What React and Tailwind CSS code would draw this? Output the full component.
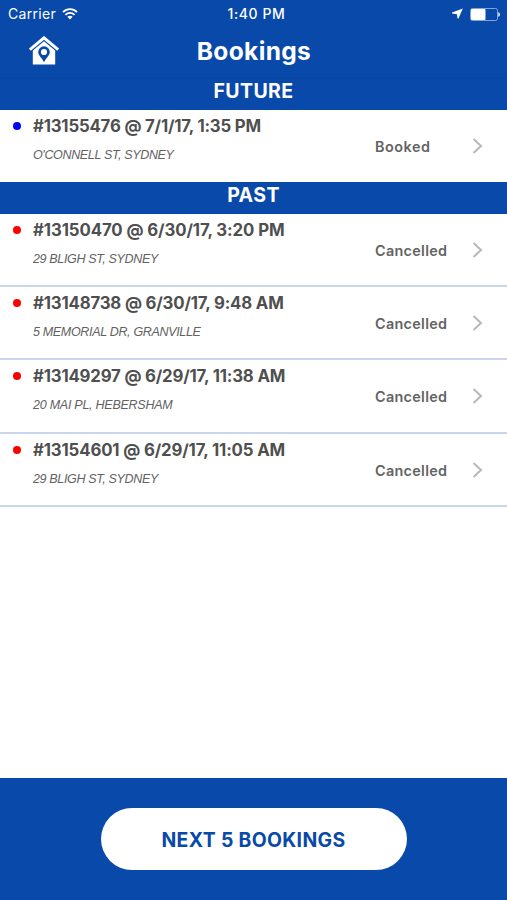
import React from "react";

const futureBookings = [
  {
    id: "13155476",
    date: "7/1/17, 1:35 PM",
    address: "O'CONNELL ST, SYDNEY",
    status: "Booked",
    titleSpacing: "tracking-[-0.2px]",
    addressSpacing: "tracking-[-0.35px]",
    statusSpacing: "tracking-[0.5px]",
  },
];

const pastBookings = [
  {
    id: "13150470",
    date: "6/30/17, 3:20 PM",
    address: "29 BLIGH ST, SYDNEY",
    status: "Cancelled",
    titleSpacing: "tracking-[-0.1px]",
    addressSpacing: "tracking-[-0.35px]",
    statusSpacing: "tracking-[0.3px]",
  },
  {
    id: "13148738",
    date: "6/30/17, 9:48 AM",
    address: "5 MEMORIAL DR, GRANVILLE",
    status: "Cancelled",
    titleSpacing: "tracking-[-0.18px]",
    addressSpacing: "tracking-[-0.33px]",
    statusSpacing: "tracking-[0.3px]",
  },
  {
    id: "13149297",
    date: "6/29/17, 11:38 AM",
    address: "20 MAI PL, HEBERSHAM",
    status: "Cancelled",
    titleSpacing: "tracking-[-0.19px]",
    addressSpacing: "tracking-[-0.25px]",
    statusSpacing: "tracking-[0.3px]",
  },
  {
    id: "13154601",
    date: "6/29/17, 11:05 AM",
    address: "29 BLIGH ST, SYDNEY",
    status: "Cancelled",
    titleSpacing: "tracking-[-0.15px]",
    addressSpacing: "tracking-[-0.35px]",
    statusSpacing: "tracking-[0.3px]",
  },
];

const StatusBar = () => (
  <div className="grid h-7 grid-cols-3 items-center pr-[7px] pl-2 text-white">
    <div className="flex items-center gap-[6px]">
      <span className="text-[14px] leading-7 tracking-[0.3px]">Carrier</span>
      <svg width="16" height="12" viewBox="0 0 16 12" fill="none" stroke="currentColor" strokeWidth="1.8">
        <path d="M1 4.2C5 .2 11 .2 15 4.2" />
        <path d="M3.4 6.9C6 4.3 10 4.3 12.6 6.9" />
        <path d="M8 11.4L5.4 8.8C6.9 7.4 9.1 7.4 10.6 8.8Z" fill="currentColor" stroke="none" />
      </svg>
    </div>
    <span className="pl-[5px] text-center text-[14px] leading-7 font-medium tracking-[0.6px]">1:40 PM</span>
    <div className="flex items-center justify-end gap-[7px]">
      <svg className="-mt-[2px]" width="11" height="11" viewBox="0 0 11 11" fill="currentColor">
        <path d="M10.8.5L0 4.6V5.6L4.9 6.3L5.5 10.6H6.5Z" />
      </svg>
      <svg width="30" height="13" viewBox="0 0 30 13" fill="none">
        <rect x=".5" y=".5" width="27" height="12" rx="2" stroke="#8fb0e0" strokeWidth=".9" />
        <rect x="1" y="1" width="14.5" height="11" rx="1" fill="#fff" />
        <path d="M28.3 4.2C30.4 4.8 30.4 8.2 28.3 8.8Z" fill="#fff" />
      </svg>
    </div>
  </div>
);

const HomeIcon = () => (
  <svg width="30" height="29" viewBox="0 0 30 29">
    <path d="M15 4.4L3.8 14V28.4H26.2V14Z" fill="#fff" />
    <path d="M.8 14.7L15 2.8L29.2 14.7" fill="none" stroke="#0849a9" strokeWidth="3.6" />
    <path d="M.8 13.7L15 1.8L29.2 13.7" fill="none" stroke="#fff" strokeWidth="3" />
    <path d="M15 26.2C13.3 22.7 9.2 19.4 9.2 16A5.8 5.8 0 0 1 20.8 16C20.8 19.4 16.7 22.7 15 26.2Z" fill="#0849a9" />
    <circle cx="15" cy="16" r="3.1" fill="#fff" />
  </svg>
);

const SectionTitle = ({ children }) => (
  <h2 className="h-full text-center text-[19.5px] leading-[25px] font-bold tracking-[0.4px] text-white">{children}</h2>
);

const BookingRow = ({ booking, dot }) => (
  <div className="flex h-full pl-[13px]">
    <span className={`mt-3 size-[8px] shrink-0 rounded-full ${dot}`} />
    <div className="ml-3 w-[342px] whitespace-nowrap">
      <h3 className={`mt-[5px] text-[16.8px] leading-[22px] font-bold text-[#4f4f4f] ${booking.titleSpacing}`}>
        #{booking.id} @ {booking.date}
      </h3>
      <p
        className={`mt-[10px] font-['Liberation_Sans',sans-serif] text-[12.5px] leading-4 text-[#626262] italic ${booking.addressSpacing}`}
      >
        {booking.address}
      </p>
    </div>
    <span className={`mt-[27px] w-[97px] text-[14.4px] leading-5 font-semibold text-[#636363] ${booking.statusSpacing}`}>
      {booking.status}
    </span>
    <svg className="mt-7" width="11" height="16" viewBox="0 0 11 16" fill="none" stroke="#b8b8b8" strokeWidth="2">
      <path d="M1.5 1L9 8L1.5 15" />
    </svg>
  </div>
);

const App = () => {
  return (
    <div className="flex h-[900px] w-[507px] flex-col overflow-hidden bg-white font-[Inter,sans-serif]">
      <header className="h-[79px] shrink-0 border-b border-[#0a45a1] bg-[#0849a9]">
        <StatusBar />
        <div className="grid h-[50px] grid-cols-3 pl-[29px]">
          <button className="mt-2 h-[29px] w-[30px]" aria-label="Home">
            <HomeIcon />
          </button>
          <h1 className="mr-[18px] -ml-[10px] text-center text-[24.5px] leading-[46px] font-bold tracking-[0.35px] text-white">
            Bookings
          </h1>
        </div>
      </header>

      <main className="flex-1">
        <div className="h-[31px] bg-[#0849a9]">
          <SectionTitle>FUTURE</SectionTitle>
        </div>
        {futureBookings.map((booking) => (
          <div key={booking.id} className="h-[72px]">
            <BookingRow booking={booking} dot="bg-[#0000ff]" />
          </div>
        ))}
        <div className="h-[32px] bg-[#0849a9] pt-px">
          <SectionTitle>PAST</SectionTitle>
        </div>
        {pastBookings.map((booking) => (
          <div key={booking.id} className="h-[73.2px] border-b-2 border-[#c9d6ee]">
            <BookingRow booking={booking} dot="bg-[#ff0000]" />
          </div>
        ))}
      </main>

      <footer className="flex h-[122px] shrink-0 justify-center bg-[#0849a9] pt-[30px]">
        <button className="h-[62px] w-[306px] rounded-full bg-white pt-[3px] text-[19.4px] font-bold tracking-[0.35px] text-[#0849a9]">
          NEXT 5 BOOKINGS
        </button>
      </footer>
    </div>
  );
};

export default App;
